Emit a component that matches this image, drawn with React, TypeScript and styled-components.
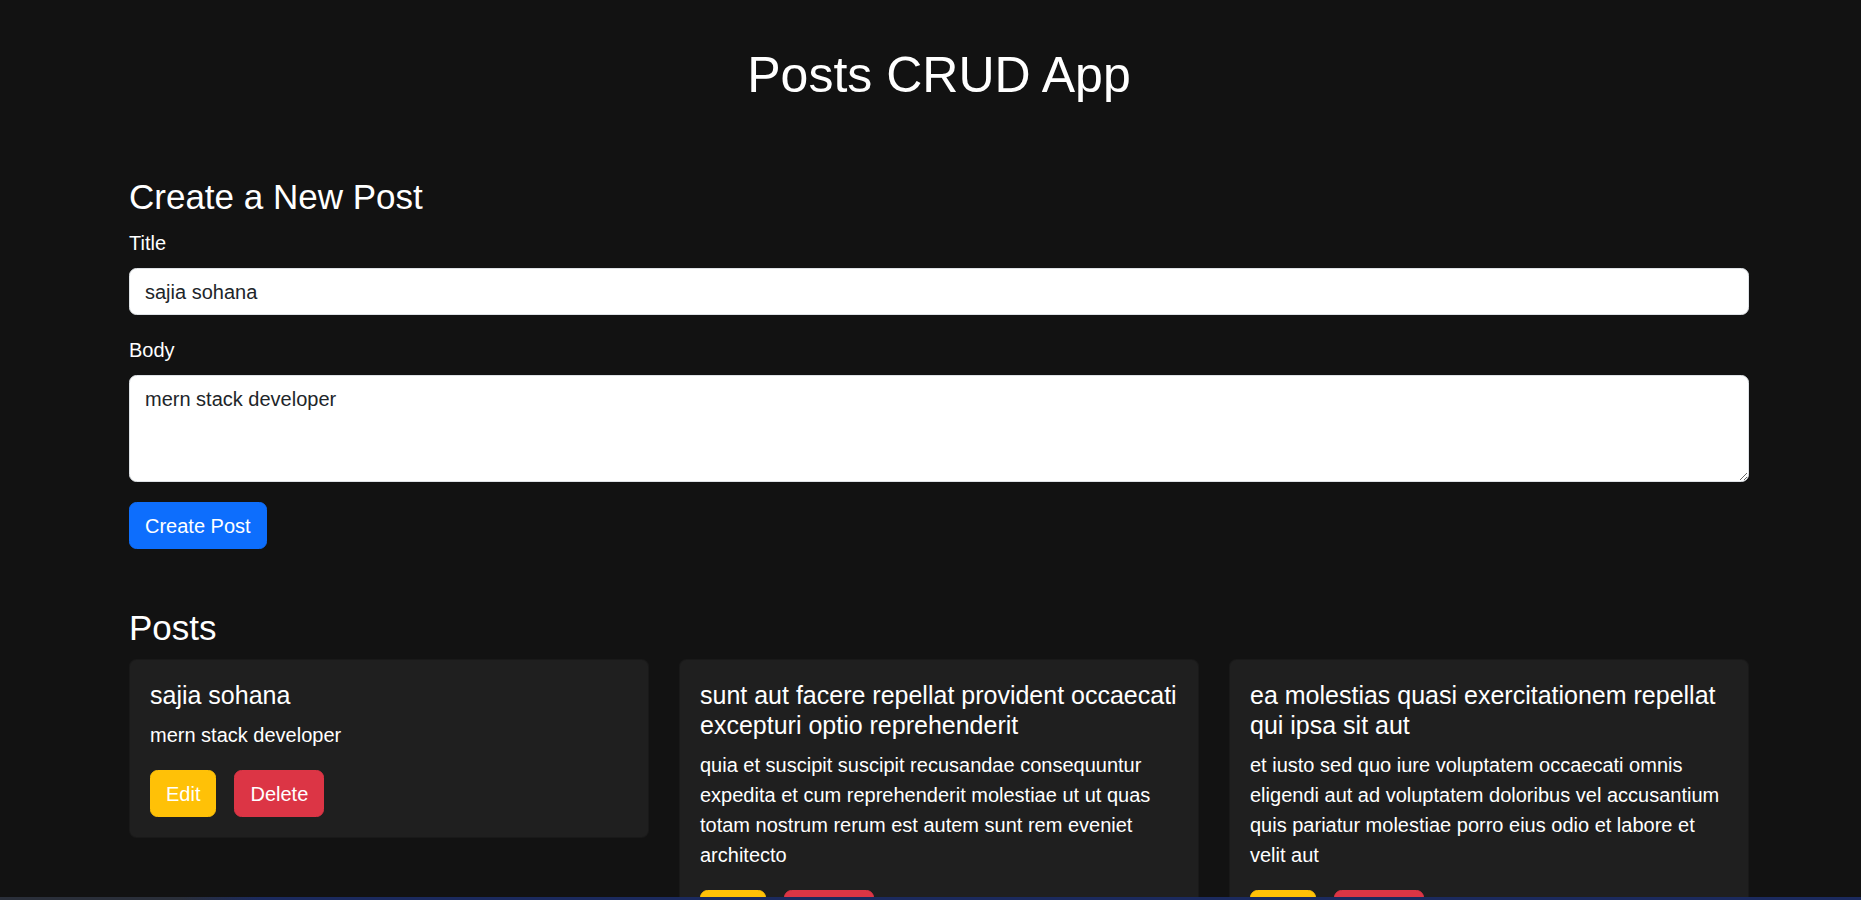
import React from "react";
import styled, { createGlobalStyle } from "styled-components";

const GlobalStyle = createGlobalStyle`
  *, *::before, *::after { box-sizing: border-box; }
  body {
    margin: 0;
    background: #121212;
    color: #ffffff;
    font-family: "Liberation Sans", Arial, sans-serif;
    font-size: 20px;
    line-height: 1.5;
  }
`;

const Page = styled.div`
  padding: 45px 112px 40px 129px;
`;

const AppTitle = styled.h1`
  margin: 0 0 71px;
  font-size: 50px;
  font-weight: 400;
  line-height: 1.2;
  text-align: center;
`;

const SectionTitle = styled.h3`
  margin: 0 0 10px;
  font-size: 35px;
  font-weight: 400;
  line-height: 1.2;
`;

const Form = styled.form`
  margin: 0 0 58px;
`;

const Field = styled.div`
  margin-bottom: 20px;
`;

const Label = styled.label`
  display: block;
  margin-bottom: 10px;
  line-height: 30px;
`;

const fieldBase = `
  display: block;
  width: 100%;
  padding: 7.5px 15px;
  font-family: "Liberation Sans", Arial, sans-serif;
  font-size: 20px;
  line-height: 30px;
  color: #212529;
  background: #ffffff;
  border: 1px solid #dee2e6;
  border-radius: 7.5px;
  outline: none;
`;

const TextInput = styled.input`
  ${fieldBase}
`;

const TextArea = styled.textarea`
  ${fieldBase}
  resize: vertical;
`;

const Button = styled.button<{ $bg: string }>`
  display: inline-block;
  padding: 7.5px 15px;
  font-family: "Liberation Sans", Arial, sans-serif;
  font-size: 20px;
  line-height: 30px;
  color: #ffffff;
  background: ${(p) => p.$bg};
  border: 1px solid ${(p) => p.$bg};
  border-radius: 7.5px;
  cursor: pointer;
`;

const PostsGrid = styled.div`
  display: grid;
  grid-template-columns: repeat(3, 1fr);
  column-gap: 30px;
  row-gap: 30px;
  align-items: start;
`;

const Card = styled.div`
  background: #1f1f1f;
  border: 1px solid rgba(0, 0, 0, 0.175);
  border-radius: 7.5px;
  padding: 20px;
`;

const CardTitle = styled.h5`
  margin: 0 0 10px;
  font-size: 25px;
  font-weight: 400;
  line-height: 30px;
`;

const CardText = styled.p`
  margin: 0 0 20px;
  line-height: 30px;
`;

const Actions = styled.div`
  display: flex;
  gap: 18px;
`;

const TaskbarEdge = styled.div`
  position: fixed;
  left: 0;
  right: 0;
  bottom: 0;
  height: 3px;
  background: linear-gradient(to right, #2a2f3a 0, #2a2f3a 180px, #1b2a5e 260px, #1b2a5e 100%);
`;

const posts = [
  { id: 0, title: "sajia sohana", body: "mern stack developer" },
  {
    id: 1,
    title: "sunt aut facere repellat provident occaecati excepturi optio reprehenderit",
    body: "quia et suscipit suscipit recusandae consequuntur expedita et cum reprehenderit molestiae ut ut quas totam nostrum rerum est autem sunt rem eveniet architecto",
  },
  {
    id: 2,
    title: "ea molestias quasi exercitationem repellat qui ipsa sit aut",
    body: "et iusto sed quo iure voluptatem occaecati omnis eligendi aut ad voluptatem doloribus vel accusantium quis pariatur molestiae porro eius odio et labore et velit aut",
  },
];

export default function App() {
  return (
    <>
      <GlobalStyle />
      <Page>
        <AppTitle>Posts CRUD App</AppTitle>
        <SectionTitle>Create a New Post</SectionTitle>
        <Form onSubmit={(e) => e.preventDefault()}>
          <Field>
            <Label htmlFor="title">Title</Label>
            <TextInput id="title" defaultValue="sajia sohana" />
          </Field>
          <Field>
            <Label htmlFor="body">Body</Label>
            <TextArea id="body" rows={3} defaultValue="mern stack developer" />
          </Field>
          <Button type="submit" $bg="#0d6efd">Create Post</Button>
        </Form>
        <SectionTitle>Posts</SectionTitle>
        <PostsGrid>
          {posts.map((p) => (
            <Card key={p.id}>
              <CardTitle>{p.title}</CardTitle>
              <CardText>{p.body}</CardText>
              <Actions>
                <Button $bg="#ffc107">Edit</Button>
                <Button $bg="#dc3545">Delete</Button>
              </Actions>
            </Card>
          ))}
        </PostsGrid>
      </Page>
      <TaskbarEdge />
    </>
  );
}
